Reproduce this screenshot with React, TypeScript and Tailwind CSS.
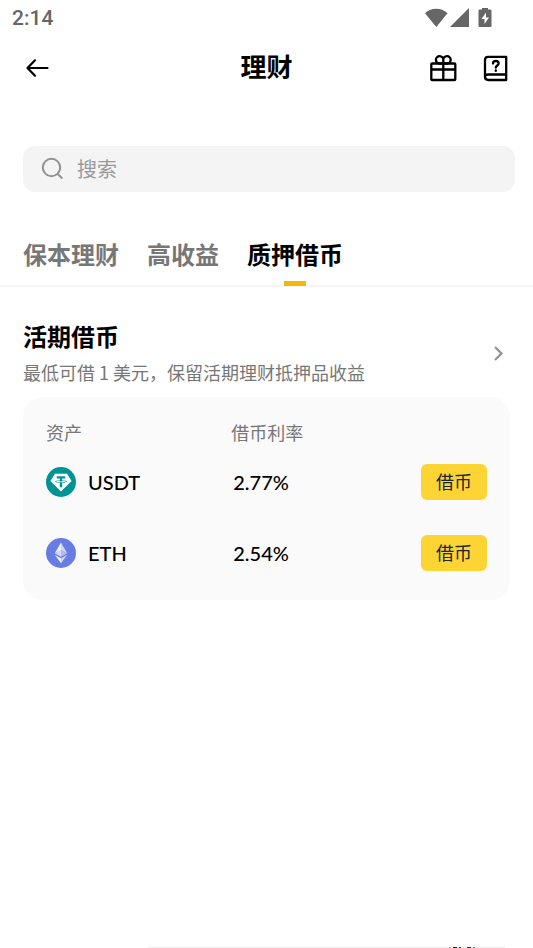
import React from 'react';

type Asset = { symbol: string; rate: string; icon: React.ReactNode };

function TetherIcon() {
  return (
    <svg viewBox="0 0 30 30" className="size-[30px] shrink-0" aria-hidden="true">
      <circle cx="15" cy="15" r="15" fill="#009393" />
      <path d="M9 6.700h12L25.600 14 15 24.600 4.400 14z" fill="#fff" />
      <path d="M10.800 9.200h8.400v2.200h-3v1.800c2.700.1 4.600.6 4.600 1.300s-1.900 1.200-4.600 1.300v4.400h-2.400v-4.400c-2.700-.1-4.600-.6-4.600-1.300s1.900-1.200 4.600-1.300v-1.800h-3z" fill="#009393" />
      <path d="M13.800 13.700c-2.200.1-3.700.4-3.700.8s2 .8 4.900.8 4.900-.4 4.900-.8-1.500-.7-3.700-.8v.9h-2.400z" fill="#fff" />
    </svg>
  );
}

function EthereumIcon() {
  return (
    <svg viewBox="0 0 30 30" className="size-[30px] shrink-0" aria-hidden="true">
      <circle cx="15" cy="15" r="15" fill="#687de3" />
      <path d="M15 4.400 8.800 15.200 15 12.300z" fill="#eeeffb" />
      <path d="M15 4.400 21.200 15.200 15 12.300z" fill="#d0d4f3" />
      <path d="M8.800 15.200 15 12.300V18.700z" fill="#d8daf4" />
      <path d="M21.200 15.200 15 12.300V18.700z" fill="#b6bdeb" />
      <path d="M8.800 16.800 15 20.300V25.300z" fill="#eeeffb" />
      <path d="M21.200 16.800 15 20.300V25.300z" fill="#d0d4f3" />
    </svg>
  );
}

const assets: Asset[] = [
  { symbol: 'USDT', rate: '2.77%', icon: <TetherIcon /> },
  { symbol: 'ETH', rate: '2.54%', icon: <EthereumIcon /> },
];

const tabs = ['保本理财', '高收益', '质押借币'];

function StatusBar() {
  return (
    <div className="flex h-9 items-center justify-between pr-10 pl-3 text-[#666]">
      <span className="pt-0.5 font-['Roboto',sans-serif] text-[21px] font-medium">2:14</span>
      <svg viewBox="0 0 68 20" className="h-5 w-[68px]" fill="currentColor" aria-hidden="true">
        <path d="M0 5.200C6.500-.6 16-.6 22.500 5.200L11.300 19z" />
        <path d="M44 0v19H25z" />
        <path fillRule="evenodd" d="M57 0h6v1.500h2q1.500 0 1.500 1V18q0 1-1 1h-11q-1 0-1-1V2.500q0-1 1.500-1h2zM61 4.500l-4.500 6.500h3v5l4.500-6.500h-3z" />
      </svg>
    </div>
  );
}

function Header() {
  return (
    <header className="grid h-16 grid-cols-[1fr_auto_1fr] items-center px-6">
      <button type="button" aria-label="返回" className="justify-self-start">
        <svg viewBox="0 0 26 26" className="size-[26px]" fill="none" stroke="#000" strokeWidth="2.200" strokeLinecap="round" strokeLinejoin="round" aria-hidden="true">
          <path d="M23.500 13H4M11 5.300 3.500 13l7.500 7.700" />
        </svg>
      </button>
      <h1 className="pb-1 text-[26px] leading-9 font-bold">理财</h1>
      <div className="flex items-center gap-6 justify-self-end">
        <button type="button" aria-label="礼物">
          <svg viewBox="0 0 28 28" className="size-7" fill="none" stroke="#000" strokeWidth="2.300" strokeLinejoin="round" aria-hidden="true">
            <rect x="2.300" y="9.500" width="24" height="16.500" rx=".8" />
            <path d="M2.300 15.500H26.300M14.300 9.500v16.500M14.300 9.500H10.800A3.700 3.700 0 1 1 14.300 6zM14.300 9.500h3.500A3.700 3.700 0 1 0 14.300 6z" />
          </svg>
        </button>
        <button type="button" aria-label="帮助">
          <svg viewBox="0 0 28 28" className="size-7" fill="none" stroke="#000" strokeWidth="2.300" strokeLinejoin="round" strokeLinecap="round" aria-hidden="true">
            <path d="M25.200 20.500V2.800H7Q4 2.800 4 6v16.800q0 3.200 3.300 3.200h17.900V20.500H7.300Q4 20.500 4 23" />
            <path d="M12 9.500q0-2.500 2.800-2.500t2.800 2.500c0 2-2.800 2-2.800 4.200M14.800 16.500v.4" />
          </svg>
        </button>
      </div>
    </header>
  );
}

export default function App() {
  return (
    <div className="flex min-h-screen flex-col bg-white font-['Noto_Sans_CJK_SC',sans-serif] text-black">
      <StatusBar />
      <Header />
      <label className="mt-[46px] mr-[18px] ml-[23px] flex h-[46px] items-center gap-3 rounded-xl bg-[#f4f4f4] px-[18px]">
        <svg viewBox="0 0 24 24" className="size-6 shrink-0" fill="none" stroke="#929292" strokeWidth="2" aria-hidden="true">
          <circle cx="10.500" cy="10.500" r="8.700" />
          <path d="m16.800 17 4.500 4.500" />
        </svg>
        <input type="search" aria-label="搜索" placeholder="搜索" className="min-w-0 flex-1 bg-transparent text-xl outline-none placeholder:text-[#999]" />
      </label>
      <nav role="tablist" className="mt-[38px] flex h-[57px] gap-7 border-b-2 border-[#f4f4f4] px-[23px]">
        {tabs.map((tab) => {
          const active = tab === '质押借币';
          return (
            <button
              key={tab}
              type="button"
              role="tab"
              aria-selected={active}
              className={`relative h-12 text-2xl font-bold ${active ? 'text-black' : 'text-[#777]'}`}
            >
              {tab}
              {active && <span className="absolute -bottom-2 left-1/2 h-[5px] w-[22px] -translate-x-1/2 bg-[#f0b90b]" />}
            </button>
          );
        })}
      </nav>
      <main className="flex-1 px-[23px] pt-[31px]">
        <a href="#flexible" className="flex items-center justify-between">
          <div>
            <h2 className="text-2xl leading-9 font-bold">活期借币</h2>
            <p className="text-lg leading-9 text-[#777]">最低可借 1 美元，保留活期理财抵押品收益</p>
          </div>
          <svg viewBox="0 0 24 24" className="size-6" fill="none" stroke="#929292" strokeWidth="2.200" aria-hidden="true">
            <path d="m9 5 6.500 6.500L9 18" />
          </svg>
        </a>
        <section className="mt-[7px] rounded-[20px] bg-[#fafafa] px-[23px] pt-[21px] pb-3">
          <table className="w-full table-fixed text-left">
            <thead>
              <tr className="h-7 text-lg leading-7 text-[#777]">
                <th className="w-[42%] p-0 font-normal">资产</th>
                <th className="p-0 font-normal">借币利率</th>
                <th className="p-0" aria-label="操作" />
              </tr>
            </thead>
            <tbody>
              {assets.map((asset) => (
                <tr key={asset.symbol} className="h-[71px] font-['Lato',sans-serif] text-xl font-medium">
                  <td className="p-0">
                    <div className="flex items-center gap-3">
                      {asset.icon}
                      <span>{asset.symbol}</span>
                    </div>
                  </td>
                  <td className="p-0 pl-0.5">{asset.rate}</td>
                  <td className="p-0 text-right">
                    <button type="button" className="h-9 w-[66px] rounded-md bg-[#fcd535] pb-0.5 align-middle font-['Noto_Sans_CJK_SC',sans-serif] text-lg leading-8 font-normal text-[#202630]">
                      借币
                    </button>
                  </td>
                </tr>
              ))}
            </tbody>
          </table>
        </section>
      </main>
      <footer className="mr-7 ml-[148px] flex h-px justify-end gap-0.5 bg-[#eee] pr-[30px]">
        <span className="w-0.5 bg-[#c8974d]" />
        <span className="w-1 bg-[#222]" />
        <span className="w-0.5 bg-[#344]" />
        <span className="ml-1 w-1 bg-[#333]" />
        <span className="w-0.5 bg-[#578]" />
      </footer>
    </div>
  );
}
